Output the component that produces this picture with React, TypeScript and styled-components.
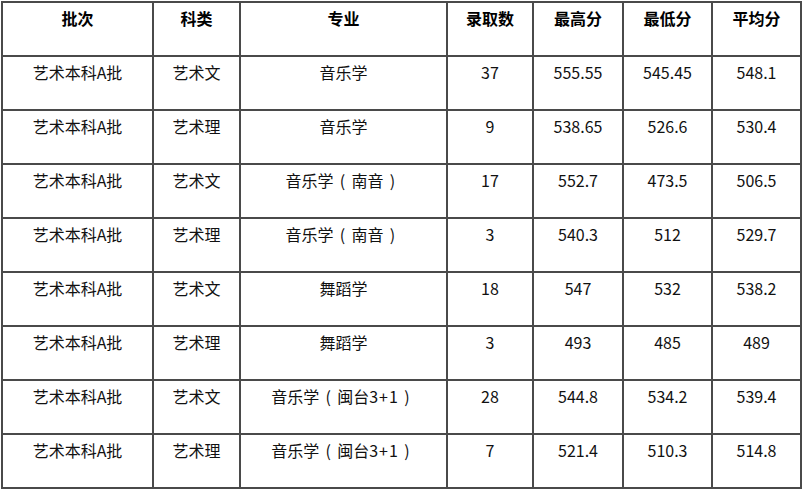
import React from "react";
import styled, { createGlobalStyle } from "styled-components";

const Global = createGlobalStyle`
  html, body { margin: 0; padding: 0; background: #fff; }
  body { font-family: "Noto Sans CJK SC", "Microsoft YaHei", sans-serif; color: #111; }
`;

const Page = styled.div`
  padding: 1px 0 0 1px;
`;

const Table = styled.table`
  border-collapse: collapse;
  table-layout: fixed;
  width: 801px;
`;

const Row = styled.tr`
  height: 54px;
`;

const cell = `
  border: 2px solid #4a4a4a;
  padding: 4px 2px 0;
  vertical-align: top;
  text-align: center;
  font-size: 16px;
  line-height: 22px;
  white-space: nowrap;
`;

const Th = styled.th`
  ${cell}
  font-weight: bold;
  color: #000;
`;

const Td = styled.td`
  ${cell}
  font-weight: normal;
  color: #111;
`;

const Paren = styled.span`
  display: inline-block;
  width: 18px;
  text-align: center;
`;

const Plus = styled.span`
  padding: 0 1px;
`;

function renderText(text: string) {
  const parts = text.split(/([（）+])/);
  return parts.map((p, i) => {
    if (p === "（") return <Paren key={i}>(</Paren>;
    if (p === "）") return <Paren key={i}>)</Paren>;
    if (p === "+") return <Plus key={i}>{p}</Plus>;
    return <React.Fragment key={i}>{p}</React.Fragment>;
  });
}

const widths = [151, 87, 207, 86, 90, 89, 89];
const headers = ["批次", "科类", "专业", "录取数", "最高分", "最低分", "平均分"];
const rows = [
  ["艺术本科A批", "艺术文", "音乐学", "37", "555.55", "545.45", "548.1"],
  ["艺术本科A批", "艺术理", "音乐学", "9", "538.65", "526.6", "530.4"],
  ["艺术本科A批", "艺术文", "音乐学（南音）", "17", "552.7", "473.5", "506.5"],
  ["艺术本科A批", "艺术理", "音乐学（南音）", "3", "540.3", "512", "529.7"],
  ["艺术本科A批", "艺术文", "舞蹈学", "18", "547", "532", "538.2"],
  ["艺术本科A批", "艺术理", "舞蹈学", "3", "493", "485", "489"],
  ["艺术本科A批", "艺术文", "音乐学（闽台3+1）", "28", "544.8", "534.2", "539.4"],
  ["艺术本科A批", "艺术理", "音乐学（闽台3+1）", "7", "521.4", "510.3", "514.8"],
];

export default function App() {
  return (
    <Page>
      <Global />
      <Table>
        <colgroup>
          {widths.map((w, i) => (
            <col key={i} style={{ width: w }} />
          ))}
        </colgroup>
        <thead>
          <Row>
            {headers.map((h) => (
              <Th key={h}>{h}</Th>
            ))}
          </Row>
        </thead>
        <tbody>
          {rows.map((r, i) => (
            <Row key={i}>
              {r.map((c, j) => (
                <Td key={j}>{renderText(c)}</Td>
              ))}
            </Row>
          ))}
        </tbody>
      </Table>
    </Page>
  );
}
